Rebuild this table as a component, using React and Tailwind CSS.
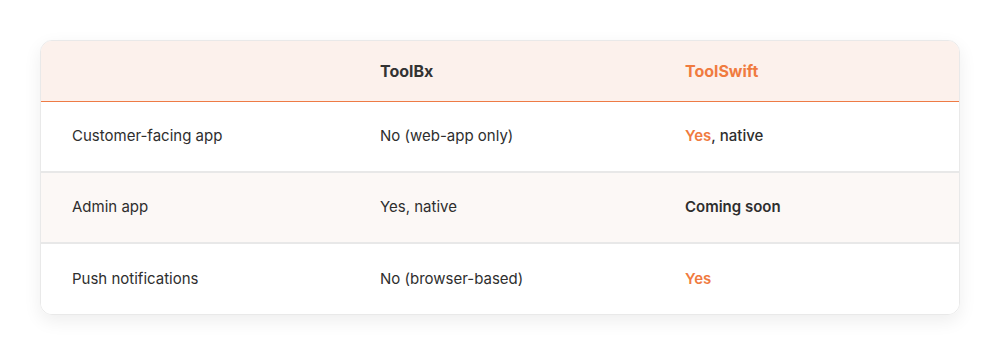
import React from 'react';

const rows = [
  { feature: 'Customer-facing app', toolbx: 'No (web-app only)', swift: <><span className="text-[#f07b3f] font-semibold">Yes</span><span className="font-medium">, native</span></>, bg: 'bg-white' },
  { feature: 'Admin app', toolbx: 'Yes, native', swift: <span className="font-semibold">Coming soon</span>, bg: 'bg-[#fcf8f6]' },
  { feature: 'Push notifications', toolbx: 'No (browser-based)', swift: <span className="text-[#f07b3f] font-semibold">Yes</span>, bg: 'bg-white' },
];

export default function App() {
  return (
    <div className="w-[1000px] h-[356px] bg-white pt-10 px-10 font-['Inter',sans-serif] text-[15px] text-[#2e2e2e]">
      <div className="rounded-xl border border-[#e9e9e9] overflow-hidden shadow-[0_6px_18px_rgba(0,0,0,0.07)]">
        <div className="grid grid-cols-[308px_305px_1fr] h-[61px] items-center bg-[#fcf1ec] border-b border-[#ee7b45] font-bold text-[16px]">
          <div className="px-[31px]" />
          <div className="px-[31px] text-[#333]">ToolBx</div>
          <div className="px-[31px] text-[#f07b3f]">ToolSwift</div>
        </div>
        {rows.map((r, i) => (
          <div
            key={i}
            className={`grid grid-cols-[308px_305px_1fr] items-center ${r.bg} ${i < rows.length - 1 ? 'h-[71px] border-b-2 border-[#e8e8e8]' : 'h-[70px]'}`}
          >
            <div className="px-[31px]">{r.feature}</div>
            <div className="px-[31px]">{r.toolbx}</div>
            <div className="px-[31px]">{r.swift}</div>
          </div>
        ))}
      </div>
    </div>
  );
}
